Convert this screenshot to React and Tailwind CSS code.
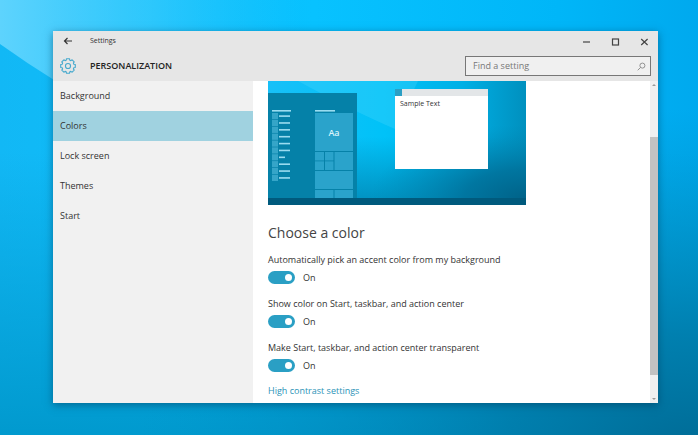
import { useState } from "react";

const navItems = ["Background", "Colors", "Lock screen", "Themes", "Start"];

const toggles = [
  { id: "accent", label: "Automatically pick an accent color from my background" },
  { id: "taskbar", label: "Show color on Start, taskbar, and action center" },
  { id: "transparent", label: "Make Start, taskbar, and action center transparent" },
];

// Points of the eight-toothed outline of the settings gear
const gearPath = (() => {
  const points = [];
  for (let i = 0; i < 8; i++) {
    const mid = (i * Math.PI) / 4;
    [
      [-0.3, 7.6],
      [-0.2, 9.3],
      [0.2, 9.3],
      [0.3, 7.6],
    ].forEach(([offset, r]) => {
      const x = 10 + r * Math.sin(mid + offset);
      const y = 10 - r * Math.cos(mid + offset);
      points.push(`${x.toFixed(2)} ${y.toFixed(2)}`);
    });
  }
  return `M${points.join("L")}Z`;
})();

const GearIcon = () => (
  <svg
    viewBox="0 0 20 20"
    className="size-4 shrink-0 text-[#45a9cd]"
    fill="none"
    stroke="currentColor"
    strokeWidth="1.4"
    strokeLinejoin="round"
    aria-hidden="true"
  >
    <path d={gearPath} />
    <circle cx="10" cy="10" r="3.2" />
  </svg>
);

// Desktop wallpaper with the pale beam in its top left corner
const Wallpaper = () => (
  <svg
    viewBox="0 0 698 435"
    preserveAspectRatio="none"
    className="absolute inset-0 size-full"
    aria-hidden="true"
  >
    <defs>
      <linearGradient id="sky" x1="0" y1="0" x2="1" y2="0">
        <stop offset="0" stopColor="#12b8f5" />
        <stop offset="0.45" stopColor="#08c2ff" />
        <stop offset="0.8" stopColor="#00b6f8" />
        <stop offset="1" stopColor="#00a9ee" />
      </linearGradient>
      <linearGradient id="depth" x1="0" y1="0" x2="0" y2="1">
        <stop offset="0.35" stopColor="#0098cc" stopOpacity="0" />
        <stop offset="1" stopColor="#0098cc" stopOpacity="0.95" />
      </linearGradient>
      <radialGradient id="corner" cx="1" cy="1.05" r="0.8">
        <stop offset="0" stopColor="#006a94" />
        <stop offset="0.35" stopColor="#007aa8" stopOpacity="0.85" />
        <stop offset="1" stopColor="#0090c4" stopOpacity="0" />
      </radialGradient>
      <linearGradient id="beam" x1="0" y1="0" x2="300" y2="0" gradientUnits="userSpaceOnUse">
        <stop offset="0" stopColor="#6bd8ff" stopOpacity="0.85" />
        <stop offset="0.5" stopColor="#4dd2ff" stopOpacity="0.5" />
        <stop offset="1" stopColor="#2cc8ff" stopOpacity="0" />
      </linearGradient>
    </defs>
    <rect width="698" height="435" fill="url(#sky)" />
    <rect width="698" height="435" fill="url(#depth)" />
    <rect width="698" height="435" fill="url(#corner)" />
    <path d="M0 0H300V200Q120 130 0 44Z" fill="url(#beam)" />
  </svg>
);

const Preview = () => {
  const rows = [0, 1, 2, 3, 4, 5, 6, 7, 8, 9];

  return (
    <svg viewBox="0 0 258 124" className="block w-full max-w-[258px]" role="img" aria-label="Preview">
      <defs>
        <linearGradient id="wall" x1="0" y1="0" x2="1" y2="0">
          <stop offset="0" stopColor="#18c0f8" />
          <stop offset="0.45" stopColor="#00c2f8" />
          <stop offset="0.75" stopColor="#00b0e6" />
          <stop offset="1" stopColor="#0090be" />
        </linearGradient>
        <linearGradient id="floor" x1="0" y1="0" x2="0" y2="1">
          <stop offset="0.45" stopColor="#008cba" stopOpacity="0" />
          <stop offset="1" stopColor="#008cba" stopOpacity="0.95" />
        </linearGradient>
        <radialGradient id="shade" cx="1" cy="0.95" r="0.6">
          <stop offset="0" stopColor="#006288" />
          <stop offset="0.4" stopColor="#006f98" stopOpacity="0.8" />
          <stop offset="1" stopColor="#0088b4" stopOpacity="0" />
        </radialGradient>
      </defs>
      <rect width="258" height="124" fill="url(#wall)" />
      <rect width="258" height="124" fill="url(#floor)" />
      <rect width="258" height="124" fill="url(#shade)" />
      <path d="M30 0Q85 30 127 48L150 0Z" fill="#6be0ff" opacity="0.22" />

      {/* Start menu */}
      <rect y="12" width="89" height="105" fill="#0581a8" />
      <rect x="4" y="29" width="19" height="1.6" fill="#9adcf0" />
      <rect x="47" y="29" width="20" height="1.6" fill="#9adcf0" />
      {rows.map((i) => (
        <g key={i}>
          <rect x="4" y={32 + i * 6.87} width="6" height="6.2" fill="#35a5c8" />
          <rect x="11" y={34.3 + i * 6.87} width={i === 6 ? 6 : 11} height="1.6" fill="#9adcf0" />
        </g>
      ))}
      <g fill="#2aa3cb">
        <rect x="47" y="32" width="38" height="38" />
        <rect x="47" y="71" width="9" height="8.5" />
        <rect x="57" y="71" width="8.5" height="8.5" />
        <rect x="47" y="80.3" width="9" height="8.7" />
        <rect x="57" y="80.3" width="8.5" height="8.7" />
        <rect x="66.5" y="71" width="18.5" height="18" />
        <rect x="47" y="90" width="38" height="18" />
        <rect x="47" y="109" width="18.5" height="8" />
        <rect x="66.5" y="109" width="18.5" height="8" />
      </g>
      <text x="66" y="55" textAnchor="middle" fontSize="9" fontWeight="600" fill="#d8f3fb">
        Aa
      </text>

      {/* Sample window */}
      <rect x="127" y="8" width="93" height="80" fill="#fff" />
      <rect x="127" y="8" width="93" height="7" fill="#e3e6e8" />
      <rect x="127" y="8" width="7" height="7" fill="#2a9fc4" />
      <text x="132" y="25" fontSize="7" fill="#333">
        Sample Text
      </text>

      <rect y="117" width="258" height="7" fill="#005a7d" />
    </svg>
  );
};

const Toggle = ({ id, label }) => {
  const [on, setOn] = useState(true);

  return (
    <div className="flex flex-col gap-[3px]">
      <label htmlFor={id} className="text-[9px] leading-4">
        {label}
      </label>
      <div className="flex items-center gap-2">
        <input
          id={id}
          type="checkbox"
          role="switch"
          checked={on}
          onChange={(e) => setOn(e.target.checked)}
          className="h-[13px] w-[27px] appearance-none rounded-full bg-gray-400 p-[3px] before:block before:size-[7px] before:rounded-full before:bg-white checked:bg-[#2a9fc4] checked:before:ml-auto"
        />
        <span className="text-[9px] leading-[13px]">{on ? "On" : "Off"}</span>
      </div>
    </div>
  );
};

const App = () => {
  const [active, setActive] = useState("Colors");

  return (
    <div className="relative flex min-h-screen pt-[31px] pr-10 pb-8 pl-[53px] font-['Open_Sans','Noto_Sans',sans-serif] text-[#333]">
      <Wallpaper />
      <div className="relative flex flex-1 flex-col bg-white shadow-[0_2px_8px_rgba(0,50,80,0.5)]">
        <header className="bg-[#e6e6e6]">
          <div className="flex h-5 items-center pl-[10px]">
            <button type="button" aria-label="Back">
              <svg viewBox="0 0 10 10" className="size-[10px]" fill="none" stroke="#333" strokeWidth="1.2" aria-hidden="true">
                <path d="M9 5H1.5M4.5 2L1.5 5l3 3" />
              </svg>
            </button>
            <span className="ml-[17px] text-[7px]">Settings</span>
            <div className="ml-auto flex items-center gap-5 pr-[9px]">
              <button type="button" aria-label="Minimize">
                <svg viewBox="0 0 9 9" className="size-[9px]" stroke="#444" strokeWidth="1.2" aria-hidden="true">
                  <path d="M1 5h7" />
                </svg>
              </button>
              <button type="button" aria-label="Maximize">
                <svg viewBox="0 0 9 9" className="size-[9px]" fill="none" stroke="#444" strokeWidth="1.2" aria-hidden="true">
                  <rect x="1.5" y="2" width="6" height="6" />
                </svg>
              </button>
              <button type="button" aria-label="Close">
                <svg viewBox="0 0 9 9" className="size-[9px]" stroke="#444" strokeWidth="1.2" aria-hidden="true">
                  <path d="M1.2 2l6.4 6M7.6 2l-6.4 6" />
                </svg>
              </button>
            </div>
          </div>
          <div className="flex h-[30px] items-center pr-[7px] pl-[7px]">
            <GearIcon />
            <h1 className="ml-[14px] text-[9px] font-semibold text-[#222]">PERSONALIZATION</h1>
            <div className="ml-auto flex h-5 w-[186px] items-center border border-[#777] bg-[#f0f0f0] pr-1 pl-[7px]">
              <input
                type="search"
                aria-label="Find a setting"
                placeholder="Find a setting"
                className="min-w-0 flex-1 text-[9px] outline-none placeholder:text-[#777]"
              />
              <svg viewBox="0 0 10 10" className="size-[9px]" fill="none" stroke="#888" strokeWidth="1" aria-hidden="true">
                <circle cx="6" cy="4" r="2.8" />
                <path d="M4 6L0.8 9.2" />
              </svg>
            </div>
          </div>
        </header>

        <div className="flex flex-1">
          <nav className="flex w-[200px] shrink-0 flex-col bg-[#f1f1f1]">
            {navItems.map((item) => (
              <button
                key={item}
                type="button"
                onClick={() => setActive(item)}
                className={`h-[30px] px-[7px] text-left text-[9px] ${active === item ? "bg-[#a0d2e0]" : ""}`}
              >
                {item}
              </button>
            ))}
          </nav>

          <main className="flex-1 pl-[15px]">
            <Preview />
            <h2 className="mt-4 text-sm leading-6 text-[#444]">Choose a color</h2>
            <div className="mt-[7px] flex flex-col gap-3">
              {toggles.map((toggle) => (
                <Toggle key={toggle.id} {...toggle} />
              ))}
            </div>
            <a href="#contrast" className="mt-[11px] block text-[9px] leading-4 text-[#2a93b8]">
              High contrast settings
            </a>
          </main>

          {/* Scrollbar */}
          <div className="flex w-2 flex-col items-center bg-[#f0f0f0]" aria-hidden="true">
            <svg viewBox="0 0 8 8" className="size-2" fill="#999">
              <path d="M2 5h4L4 3z" />
            </svg>
            <div className="mt-12 w-full flex-1 bg-[#c2c2c2]" />
            <svg viewBox="0 0 8 8" className="mt-5 size-2" fill="#999">
              <path d="M2 3h4L4 5z" />
            </svg>
          </div>
        </div>
      </div>
    </div>
  );
};
export default App;
